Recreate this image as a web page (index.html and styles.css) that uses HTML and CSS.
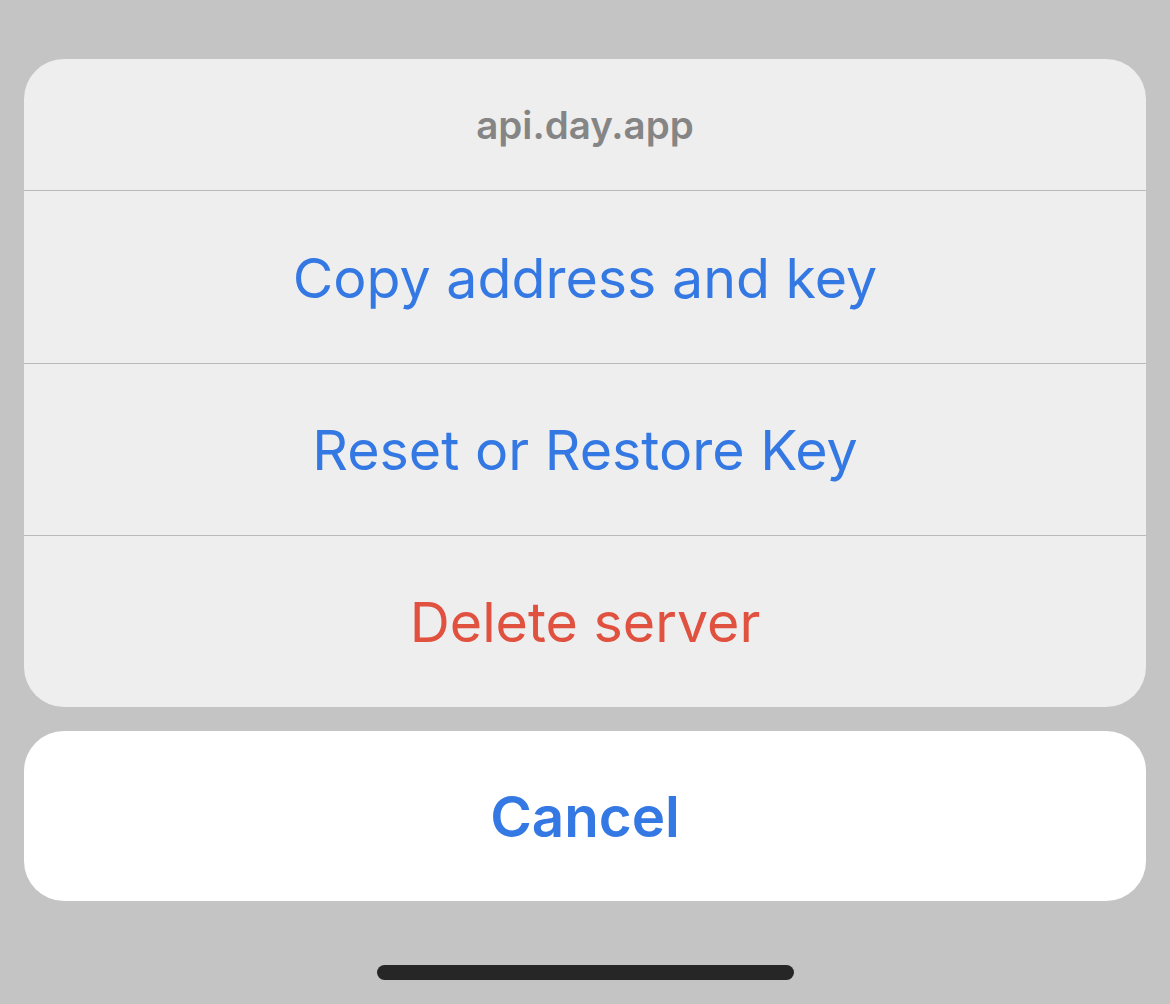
FILE: index.html
```html
<!DOCTYPE html>
<html>
<head>
<meta charset="utf-8">
<link rel="stylesheet" href="styles.css">
</head>
<body>
<div class="sheet">
  <div class="group">
    <div class="title">api.day.app</div>
    <div class="action blue">Copy address and key</div>
    <div class="action blue">Reset or Restore Key</div>
    <div class="action red">Delete server</div>
  </div>
  <div class="cancel">Cancel</div>
</div>
<div class="home"></div>
</body>
</html>
```
FILE: styles.css
```css
html, body {
  margin: 0;
  padding: 0;
  background: #c4c4c4;
  width: 1170px;
  height: 1004px;
  overflow: hidden;
  font-family: Inter, "Noto Sans", sans-serif;
}
.sheet {
  padding: 59px 24px 0 24px;
  display: flex;
  flex-direction: column;
  gap: 24px;
}
.group {
  background: #eeeeee;
  border-radius: 40px;
  overflow: hidden;
  display: flex;
  flex-direction: column;
}
.title {
  height: 132px;
  display: flex;
  align-items: center;
  justify-content: center;
  font-size: 38.5px;
  font-weight: 600;
  color: #858585;
  border-bottom: 1px solid #b9b9b9;
  box-sizing: border-box;
}
.action {
  height: 172px;
  display: flex;
  align-items: center;
  justify-content: center;
  font-size: 55.5px;
  font-weight: 400;
  box-sizing: border-box;
}
.action + .action {
  border-top: 1px solid #b9b9b9;
}
.blue { color: #3478e3; }
.red { color: #e0513f; }
.cancel {
  height: 170px;
  background: #ffffff;
  border-radius: 40px;
  display: flex;
  align-items: center;
  justify-content: center;
  font-size: 56.5px;
  font-weight: 600;
  color: #3478e3;
}
.home {
  width: 417px;
  height: 15px;
  background: #262626;
  border-radius: 8px;
  margin: 64px auto 0 auto;
}
```
